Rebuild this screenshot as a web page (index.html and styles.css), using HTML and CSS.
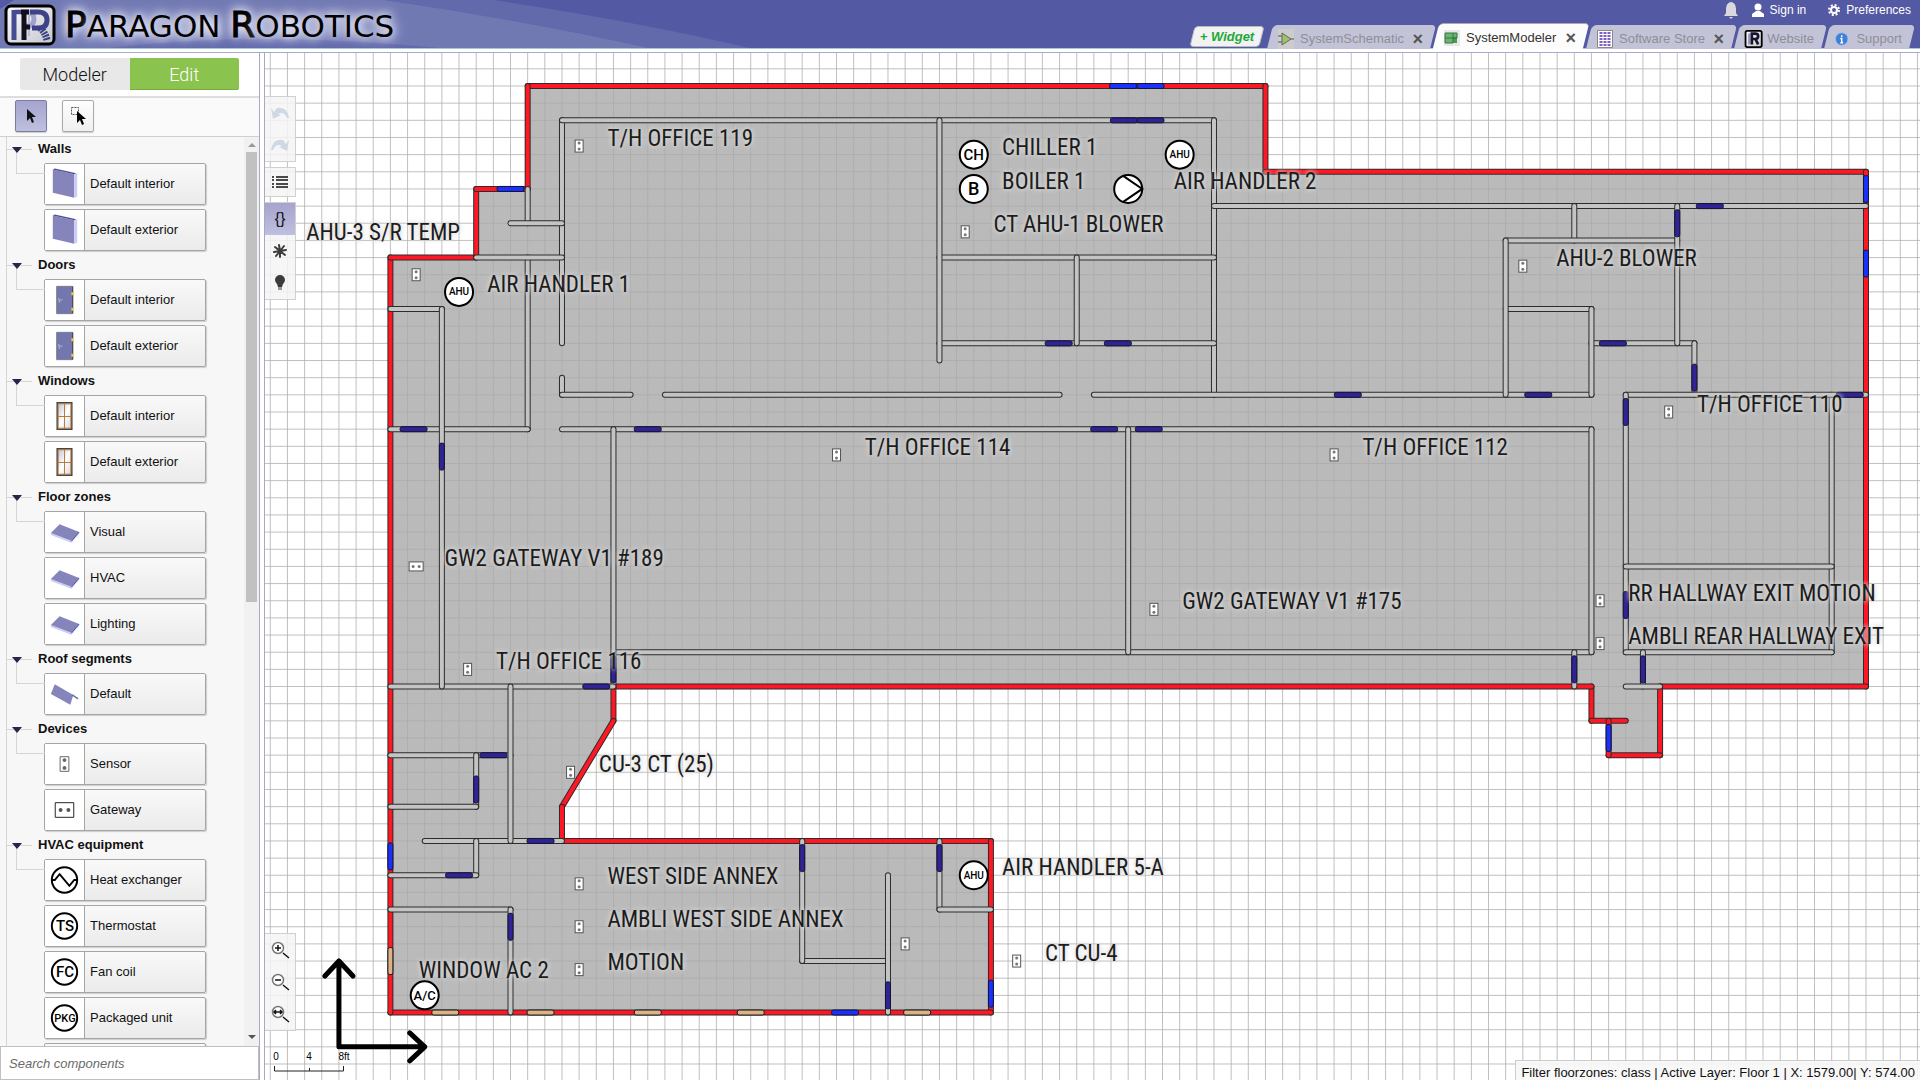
FILE: index.html
```html
<!DOCTYPE html>
<html lang="en">
<head>
<meta charset="utf-8">
<title>SystemModeler</title>
<link rel="stylesheet" href="styles.css">
</head>
<body>
<svg class="defs" aria-hidden="true">
  <defs>
    <linearGradient id="glass" x1="0" y1="0" x2="1" y2="1"><stop offset="0" stop-color="#b9bdd0"/><stop offset=".5" stop-color="#fff"/><stop offset="1" stop-color="#d5d6e2"/></linearGradient>
    <linearGradient id="plate" x1="0" y1="0" x2="1" y2="1"><stop offset="0" stop-color="#fff"/><stop offset="1" stop-color="#c4c4cc"/></linearGradient>
    <symbol id="i-wall" viewBox="0 0 40 40"><path d="M8 5l22 5v24L8 29z" fill="#8585bc"/><path d="M8 5l2-1 22 5-2 1z" fill="#4c4f96"/><path d="M30 10l3-1v24l-3 1z" fill="#ccccfa"/></symbol>
    <symbol id="i-door" viewBox="0 0 40 40"><path d="M12 6h16v28H12z" fill="#7476b0" stroke="#777b85"/><path d="M28.500 6v28" stroke="#333"/><path d="M14 20h4" stroke="#aabcc0"/><path d="M14 18l1 5" stroke="#aabcc0"/><path d="M28 12v3M28 28v3" stroke="#edc73c" stroke-width="2"/></symbol>
    <symbol id="i-window" viewBox="0 0 40 40"><path d="M12.500 6.500h15v27h-15z" fill="url(#glass)" stroke="#444" stroke-width="1.500"/><path d="M13.500 7.500h13v25h-13zM20 7v26M13 20.500h14" fill="none" stroke="#b87838"/></symbol>
    <symbol id="i-floor" viewBox="0 0 40 40"><path d="M6 21v2l21 8 8-9v-2l-8 9z" fill="#ccccfa"/><path d="M6 21l9-9 20 8-8 9z" fill="#8585bc"/><path d="M27 29.500l8-9.500" stroke="#4c4f96"/></symbol>
    <symbol id="i-roof" viewBox="0 0 40 40"><path d="M10 10l19 11-3 10L6 20z" fill="#8585bc"/><path d="M28 21l6 4" stroke="#7072b0" stroke-width="1.500"/></symbol>
    <symbol id="i-sensor" viewBox="0 0 40 40"><path d="M15.500 12.500h9v15h-9z" fill="#fff" stroke="#666"/><circle cx="20" cy="16" r="2" fill="#666"/><circle cx="20" cy="24" r="2" fill="#666"/></symbol>
    <symbol id="i-gateway" viewBox="0 0 40 40"><path d="M10.500 12.500h19v15h-19z" fill="#fff" stroke="#222"/><circle cx="16" cy="20" r="2" fill="#555"/><circle cx="24" cy="20" r="2" fill="#555"/></symbol>
    <symbol id="i-heat" viewBox="0 0 40 40"><circle cx="20" cy="20" r="13" fill="#fff" stroke="#000" stroke-width="2"/><path d="M7 20h3l5-6 10 12 5-6h3" fill="none" stroke="#000" stroke-width="2"/></symbol>
    <symbol id="i-ring" viewBox="0 0 40 40"><circle cx="20" cy="20" r="13" fill="#fff" stroke="#000" stroke-width="2"/></symbol>
    <symbol id="i-r" viewBox="0 0 20 20"><rect x="1" y="1" width="18" height="18" rx="2" fill="url(#plate)" stroke="#000" stroke-width="2"/><path d="M5 16V4" stroke="#8d92c3" stroke-width="2"/><path d="M8 16V4h4a3 3 0 0 1 0 6H8m4 0l3 6" fill="none" stroke="#15152e" stroke-width="3"/></symbol>
  </defs>
</svg>

<header class="top">
  <svg class="swoosh" width="760" height="48" viewBox="0 0 760 48" aria-hidden="true"><path d="M0 0h385q140 20 265 48H0z" fill="#7179b3"/><path d="M385 0h109q146 22 256 48H650Q520 20 385 0z" fill="#626aac"/><path d="M110 48q140-18 330 0z" fill="#626aac"/><path d="M0 0h14Q8 4 0 9z" fill="#5359a2"/></svg>
  <div class="brand">
    <svg class="badge" viewBox="0 0 52 42" role="img" aria-label="Paragon Robotics logo">
      <rect x="2" y="2" width="48" height="38" rx="5" fill="url(#plate)" stroke="#000" stroke-width="3"/>
      <g fill="none">
        <path d="M11 8h12q7 0 7 7t-7 7h-5" stroke="#9da2cc" stroke-width="5"/>
        <path d="M10 36V6" stroke="#454c94" stroke-width="5"/>
        <path d="M8 8h9" stroke="#454c94" stroke-width="4"/>
        <path d="M26 8h8q9 0 9 8t-9 8h-6" stroke="#3b4287" stroke-width="5"/>
        <path d="M25 6v26" stroke="#b9bcd9" stroke-width="2"/>
        <path d="M36 24q5 4 7 12" stroke="#3b4287" stroke-width="7" stroke-dasharray="2 1"/>
        <path d="M20 36V6M17 8h8M20 23h6" stroke="#120e1c" stroke-width="5"/>
      </g>
    </svg>
    <span class="brand-name"><b>P</b>ARAGON <b>R</b>OBOTICS</span>
  </div>
  <nav class="nav">
    <div class="account">
      <button class="plain" aria-label="Notifications"><svg width="14" height="18" viewBox="0 0 14 18"><path d="M7 1q5 1 5 7v4l2 3H0l2-3V8q0-6 5-7zM5 16h4l-2 2z" fill="#d9d9dd"/></svg></button>
      <a href="#"><svg width="12" height="14" viewBox="0 0 12 14"><circle cx="6" cy="4" r="3.500" fill="#fff"/><path d="M0 14v-3l4-3h4l4 3v3z" fill="#fff"/></svg>Sign in</a>
      <a href="#"><svg width="12" height="12" viewBox="0 0 12 12"><circle cx="6" cy="6" r="3" fill="none" stroke="#fff" stroke-width="2"/><circle cx="6" cy="6" r="5" fill="none" stroke="#fff" stroke-width="2" stroke-dasharray="2 1.930"/></svg>Preferences</a>
    </div>
    <div class="tabs">
      <button class="widget"><span>+ Widget</span></button>
      <a class="tab t1" href="#"><svg width="16" height="20" viewBox="0 0 16 20"><path d="M0 0h16v20H0z" fill="#ccc"/><path d="M0 7h4M0 13h4M12 10h4" stroke="#555"/><path d="M4 4l9 6-9 6z" fill="#9bc46a" stroke="#666"/></svg><span>SystemSchematic</span><i class="x">×</i></a>
      <a class="tab t2 on" href="#"><svg width="16" height="16" viewBox="0 0 16 16"><path d="M0 0h16v16H0z" fill="#e8e8e8"/><path d="M1 3h12v10H9V8H1z" fill="#4d9a55"/><path d="M1 3h12v5h-4v5H1z" fill="#6cb274" stroke="#34783c"/><path d="M1 8h12M9 3v5" stroke="#34783c"/></svg><span>SystemModeler</span><i class="x">×</i></a>
      <a class="tab t3" href="#"><svg width="16" height="18" viewBox="0 0 16 18"><path d="M.5.500h15v17H.5z" fill="#fff" stroke="#888"/><path d="M4 2v14M8 2v14M12 2v14" stroke="#7d62c4" stroke-width="3" stroke-dasharray="2 1"/></svg><span>Software Store</span><i class="x">×</i></a>
      <a class="tab t4" href="#"><svg width="20" height="18"><use href="#i-r"/></svg><span>Website</span></a>
      <a class="tab t5" href="#"><svg width="14" height="14" viewBox="0 0 14 14"><circle cx="7" cy="7" r="6.500" fill="#3f7fd6" stroke="#9cbbe8"/><path d="M7 3v2M5.500 6.500H7V11M5.500 11h3" fill="none" stroke="#fff" stroke-width="1.500"/></svg><span>Support</span></a>
    </div>
  </nav>
</header>

<main class="work">
  <aside class="side">
    <div class="modes"><button>Modeler</button><button class="on">Edit</button></div>
    <div class="tools">
      <button class="tool on" aria-label="Select"><svg width="20" height="20" viewBox="0 0 20 20"><path d="M6 3v12l3-3 2 5 2-1-2-5h4z" fill="#111"/></svg></button>
      <button class="tool" aria-label="Area select"><svg width="20" height="20" viewBox="0 0 20 20"><path d="M3.500 1.500h7v7h-7z" fill="none" stroke="#555" stroke-dasharray="2 1"/><path d="M9 5v12l3-3 2 5 2-1-2-5h4z" fill="#000"/></svg></button>
    </div>
    <div class="palette">
      <div class="tree">
        <section><h2>Walls</h2><button class="item"><svg><use href="#i-wall"/></svg><span>Default interior</span></button><button class="item"><svg><use href="#i-wall"/></svg><span>Default exterior</span></button></section>
        <section><h2>Doors</h2><button class="item"><svg><use href="#i-door"/></svg><span>Default interior</span></button><button class="item"><svg><use href="#i-door"/></svg><span>Default exterior</span></button></section>
        <section><h2>Windows</h2><button class="item"><svg><use href="#i-window"/></svg><span>Default interior</span></button><button class="item"><svg><use href="#i-window"/></svg><span>Default exterior</span></button></section>
        <section><h2>Floor zones</h2><button class="item"><svg><use href="#i-floor"/></svg><span>Visual</span></button><button class="item"><svg><use href="#i-floor"/></svg><span>HVAC</span></button><button class="item"><svg><use href="#i-floor"/></svg><span>Lighting</span></button></section>
        <section><h2>Roof segments</h2><button class="item"><svg><use href="#i-roof"/></svg><span>Default</span></button></section>
        <section><h2>Devices</h2><button class="item"><svg><use href="#i-sensor"/></svg><span>Sensor</span></button><button class="item"><svg><use href="#i-gateway"/></svg><span>Gateway</span></button></section>
        <section><h2>HVAC equipment</h2><button class="item"><svg><use href="#i-heat"/></svg><span>Heat exchanger</span></button><button class="item"><svg><use href="#i-ring"/><text class="ring-text" x="20" y="25" font-size="15">TS</text></svg><span>Thermostat</span></button><button class="item"><svg><use href="#i-ring"/><text class="ring-text" x="20" y="25" font-size="15">FC</text></svg><span>Fan coil</span></button><button class="item"><svg><use href="#i-ring"/><text class="ring-text" x="20" y="24" font-size="11">PKG</text></svg><span>Packaged unit</span></button><div class="item"></div></section>
      </div>
      <div class="scroll" aria-hidden="true"><i class="up"></i><i class="thumb"></i><i class="down"></i></div>
    </div>
    <input class="search" type="text" placeholder="Search components" aria-label="Search components">
  </aside>

  <section class="canvas">
    <svg class="plan" id="plan"></svg>
    <div class="dock dock-top">
      <div class="group tall">
        <button aria-label="Undo"><svg width="20" height="20" viewBox="0 0 20 20"><path d="M1 5l2 11 8-4-3-1q6-3 9 4l2 0Q17 3 7 5l-3 4z" fill="#cfd9e3"/></svg></button>
        <button aria-label="Redo"><svg width="20" height="20" viewBox="0 0 20 20"><path d="M19 5l-2 11-8-4 3-1q-6-3-9 4l-2 0Q3 3 13 5l3 4z" fill="#cfd9e3"/></svg></button>
      </div>
      <div class="group">
        <button aria-label="List"><svg width="18" height="14" viewBox="0 0 18 14"><path d="M1 2h2m2 0h12M1 5h2m2 0h12M1 9h2m2 0h12M1 12h2m2 0h12" stroke="#111" stroke-width="1.500"/></svg></button>
      </div>
      <div class="group tall">
        <button class="on">{}</button>
        <button aria-label="HVAC"><svg width="16" height="16" viewBox="0 0 16 16"><g stroke="#3c3c3c" stroke-width="2" stroke-linecap="round"><path d="M8 8L7 2M8 8l4-5M8 8l6-1M8 8l5 4M8 8v6M8 8l-4 5M8 8l-6 1M8 8L3 4"/></g></svg></button>
        <button aria-label="Lighting"><svg width="12" height="18" viewBox="0 0 12 18"><path d="M6 1a5 5 0 0 1 5 5q0 2-2 4l-1 3H4l-1-3Q1 8 1 6a5 5 0 0 1 5-5z" fill="#3c3c3c"/><path d="M4 13h4v3H4z" fill="#999"/></svg></button>
      </div>
    </div>
    <div class="dock dock-bottom">
      <div class="group tall">
        <button aria-label="Zoom in"><svg width="20" height="20" viewBox="0 0 20 20"><circle cx="8" cy="8" r="5.500" fill="#fff" stroke="#777" stroke-width="1.500"/><path d="M13 13l6 5M5 8h6M8 5v6" stroke="#111" stroke-width="1.500"/></svg></button>
        <button aria-label="Zoom out"><svg width="20" height="20" viewBox="0 0 20 20"><circle cx="8" cy="8" r="5.500" fill="#fff" stroke="#777" stroke-width="1.500"/><path d="M13 13l6 5M5 8h6" stroke="#111" stroke-width="1.500"/></svg></button>
        <button aria-label="Zoom to fit"><svg width="20" height="20" viewBox="0 0 20 20"><circle cx="8" cy="8" r="5.500" fill="#fff" stroke="#777" stroke-width="1.500"/><path d="M13 13l6 5M4 8h8M6 6L4 8l2 2M10 6l2 2-2 2" fill="none" stroke="#111" stroke-width="1.500"/></svg></button>
      </div>
    </div>
    <svg class="scale" width="80" height="24"><g text-anchor="middle"><text x="6" y="11">0</text><text x="39" y="11">4</text><text x="74" y="11">8ft</text></g><path d="M4.500 17v5h69v-5M39.500 19v3" fill="none" stroke="#222"/></svg>
    <div class="status">Filter floorzones: class | Active Layer: Floor 1 | X: 1579.00| Y: 574.00</div>
  </section>
</main>
<script src="plan.js"></script>
</body>
</html>
```
FILE: styles.css
```css
* { box-sizing: border-box; }
html, body { height: 100%; }
body {
  margin: 0;
  display: flex;
  flex-direction: column;
  overflow: hidden;
  background: #fff;
  color: #111;
  font: 13px/16px "Liberation Sans", Arial, sans-serif;
}
button { font: inherit; color: inherit; padding: 0; border: 0; background: none; }
a { color: inherit; text-decoration: none; }
.defs { position: absolute; width: 0; height: 0; }

/* header */
.top {
  position: relative;
  flex: none;
  display: flex;
  justify-content: space-between;
  height: 49px;
  background: #5359a2;
  border-bottom: 1px solid #a5cbd0;
}
.swoosh { position: absolute; left: 0; top: 0; }
.brand { position: relative; display: flex; align-items: center; gap: 9px; padding: 2px 0 0 4px; }
.badge { width: 52px; height: 42px; }
.brand-name {
  font: 31px/40px "DejaVu Sans", sans-serif;
  color: #000;
  text-shadow: 0 0 8px #fff, 0 0 12px #e8e8f6, 0 0 16px #d8d8ee;
}
.brand-name b { font-size: 36px; font-weight: 400; -webkit-text-stroke: 1px #000; }
.nav { position: relative; display: flex; flex-direction: column; justify-content: space-between; }
.account { display: flex; justify-content: flex-end; align-items: center; height: 20px; gap: 18px; padding-right: 9px; color: #fff; font-size: 12px; }
.account a { display: flex; align-items: center; gap: 6px; }
.account a:last-child { margin-left: 4px; }
.account .plain { display: flex; margin-right: -4px; }
.tabs { display: flex; align-items: flex-end; gap: 3px; padding-right: 8px; margin-bottom: -1px; }
.widget {
  position: relative;
  width: 70px;
  height: 21px;
  margin: 0 5px 2px 0;
  z-index: 0;
  color: #1fa83a;
  font-weight: bold;
  font-style: italic;
}
.widget::before, .tab::before {
  content: "";
  position: absolute;
  inset: 0;
  z-index: -1;
  transform: skewX(-14deg);
}
.widget::before { background: #f2f2f2; border: 1px solid #bbb; border-radius: 4px; }
.tab {
  position: relative;
  z-index: 0;
  display: flex;
  align-items: center;
  gap: 6px;
  height: 24px;
  padding: 3px 10px 0 8px;
  color: #8e8e97;
}
.tab::before { background: #c3c3d8; border-radius: 5px 4px 0 0; }
.tab .x { margin-left: auto; font: bold 18px/18px "Liberation Sans", sans-serif; color: #555; }
.tab.on { height: 26px; color: #333; }
.tab.on::before { background: #fcfcfc; border-top: 1px solid #aaa; }
.t1 { width: 163px; }
.t2 { width: 150px; }
.t3 { width: 145px; }
.t4 { width: 87px; gap: 4px; padding-left: 7px; }
.t5 { width: 85px; gap: 8px; }

/* workspace */
.work { flex: 1; display: flex; gap: 4px; min-height: 0; margin-top: 3px; border-top: 1px solid #a9a9cf; }
.side { flex: none; display: flex; flex-direction: column; width: 260px; border-right: 1px solid #a9a9c4; }
.modes { display: flex; padding: 5px 20px 6px; border-bottom: 2px solid #ddd; }
.modes button { flex: 1; height: 32px; padding-top: 1px; background: #e8e8e8; border-radius: 2px 0 0 2px; font: 300 18px/32px Roboto, sans-serif; }
.modes .on { background: #8bc34f; color: #fff; border-radius: 0 2px 2px 0; border-bottom: 1px solid #79ab42; }
.tools { display: flex; gap: 15px; height: 39px; padding: 2px 15px; background: #fafafa; border-bottom: 1px solid #d0d0d0; }
.tool { display: flex; align-items: center; justify-content: center; width: 32px; height: 32px; border: 1px solid #aaa; border-radius: 2px; background: linear-gradient(#fdfdfd, #efefef); box-shadow: 0 1px 1px #ccc; }
.tool.on { border-color: #7c7c9c; background: linear-gradient(#a4a4cf, #bfbfdf); }
.palette { flex: 1; display: flex; min-height: 0; background: #f7f7f7; }
.tree { flex: 1; margin-left: 6px; border-left: 1px solid #d5d5d5; overflow: hidden; }
.tree section { position: relative; display: flex; flex-direction: column; gap: 4px; padding: 0 0 2px 37px; }
.tree h2 { position: relative; height: 22px; margin: 0 0 0 -37px; padding-left: 31px; font-size: 13px; line-height: 24px; }
.tree h2::before { content: ""; position: absolute; left: 0; top: 12px; width: 25px; border-top: 1px solid #d5d5d5; }
.tree h2::after { content: ""; position: absolute; left: 5px; top: 10px; border: 5px solid transparent; border-top: 6px solid #25254a; border-bottom: 0; }
.tree section::before { content: ""; position: absolute; left: 9px; top: 14px; width: 28px; height: 22px; border: 1px solid #d5d5d5; border-width: 0 0 1px 1px; }
.item { flex: none; display: flex; align-items: center; width: 162px; height: 42px; border: 1px solid #a5a5a5; border-radius: 2px; background: linear-gradient(#f9f9f9, #ebebeb); box-shadow: 1px 1px 1px #ccc; }
.item svg { width: 40px; height: 40px; background: #fff; border-right: 1px solid #a5a5a5; }
.item span { padding-left: 5px; }
.ring-text { font-family: Roboto, sans-serif; font-weight: 500; text-anchor: middle; }
.scroll { display: flex; flex-direction: column; align-items: center; width: 15px; background: #f1f1f1; }
.scroll i { width: 11px; }
.up, .down { flex: none; height: 15px; }
.up::before, .down::before { content: ""; display: block; width: 0; margin: 6px 2px; border: 4px solid transparent; }
.up::before { border-bottom-color: #999; border-top: 0; }
.down::before { margin-top: 4px; border-top-color: #555; border-bottom: 0; }
.down { margin-top: auto; }
.thumb { height: 49.5%; background: #c1c1c1; }
.search { flex: none; width: 100%; height: 34px; padding: 0 8px; border: 1px solid #c0c0c0; background: #fff; font: italic 13px/16px "Liberation Sans", sans-serif; outline: 0; }
.search::placeholder { color: #6a6a6a; font-style: italic; }

/* drawing area */
.canvas { position: relative; flex: 1; min-width: 0; border-left: 1px solid #a9a9c4; overflow: hidden; }
.plan { display: block; width: 100%; height: 100%; }
.grid { stroke: #b0b0b0; stroke-opacity: .8; }
.floor { fill: #a9a9a9; fill-opacity: .8; }
.edge { stroke: #2c2c2c; stroke-width: 6; stroke-linecap: round; }
.core { stroke-width: 4; stroke-linecap: round; }
.opening { stroke: #15152c; stroke-width: 1; }
.part { fill: #fff; stroke: #555; }
.dot { fill: #777; }
.ring { fill: #fff; stroke: #000; stroke-width: 2; }
.label {
  font: 400 23px "Roboto Condensed", "Liberation Sans Narrow", Roboto, sans-serif;
  fill: #1c1c1c;
  text-shadow: 0 0 4px #e0e0e0, 0 0 6px #d4d4d4;
}
.axis { fill: none; stroke: #000; stroke-width: 5; stroke-linecap: round; stroke-linejoin: round; }
.dock { position: absolute; left: 0; display: flex; flex-direction: column; gap: 5px; width: 31px; }
.dock-top { top: 43px; }
.dock-bottom { bottom: 49px; }
.group { display: flex; flex-direction: column; background: rgba(245, 245, 245, .85); border: 1px solid #d0d0d0; border-left: 0; }
.group button { display: flex; align-items: center; justify-content: center; height: 28px; font-size: 16px; }
.group.tall button { height: 32px; }
.group .on { background: linear-gradient(#a4a4cf, #bfbfdf); }
.scale { position: absolute; left: 5px; bottom: 7px; font: 10px "Liberation Sans", sans-serif; }
.status { position: absolute; right: 0; bottom: 0; height: 20px; padding: 4px 5px 0; background: rgba(247, 247, 247, .9); border: 1px solid #ccc; border-width: 1px 0 0 1px; line-height: 15px; }
```
FILE: plan.js
```js
// Floor plan, in grid cells of two feet; the origin is the building's top left corner.
const CELL = 17.158, OX = 125.4, OY = 33;
const X = u => OX + u * CELL, Y = v => OY + v * CELL;
const RED = '#ff1724', GREY = '#c4c4c4', DOOR = '#2f2395', WINDOW = '#1a30ff', AC = '#deb37e';
const svg = document.getElementById('plan');

function add(tag, attrs, text) {
  const el = document.createElementNS('http://www.w3.org/2000/svg', tag);
  for (const k in attrs) el.setAttribute(k, attrs[k]);
  if (text) el.textContent = text;
  svg.appendChild(el);
}

for (let i = -7; i < 240; i++) {
  add('line', { class: 'grid', x1: X(i), x2: X(i), y1: 0, y2: '100%' });
  if (i > -2) add('line', { class: 'grid', y1: Y(i), y2: Y(i), x1: 0, x2: '100%' });
}

const outline = [8,0, 51,0, 51,5, 86,5, 86,35, 74,35, 74,39, 71,39, 71,37, 70,37, 70,35, 13,35, 13,37, 10,42, 10,44, 35,44, 35,54, 0,54, 0,10, 5,10, 5,6, 8,6];
add('polygon', { class: 'floor', points: outline.map((n, i) => i % 2 ? Y(n) : X(n)).join(' ') });

function wall([a, b, c, d], color) {
  const p = { x1: X(a), y1: Y(b), x2: X(c), y2: Y(d) };
  add('line', { class: 'edge', ...p });
  add('line', { class: 'core', stroke: color, ...p });
}
[[8,0,51,0],[51,0,51,5],[51,5,86,5],[86,5,86,35],[74,35,86,35],[74,35,74,39],[71,39,74,39],[70,35,70,37],[70,37,72,37],[71,37,71,39],
 [13,35,70,35],[13,35,13,37],[13,37,10,42],[10,42,10,44],[10,44,35,44],[35,44,35,54],[0,54,35,54],[0,10,0,54],[0,10,5,10],[5,6,5,10],[5,6,8,6],[8,0,8,6]
].forEach(w => wall(w, RED));
[[10,2,10,15],[10,17,10,18],[10,2,48,2],[10,18,14,18],[16,18,39,18],[48,2,48,18],[41,18,70,18],[32,10,48,10],[32,15,48,15],[32,2,32,16],[40,10,40,15],
 [48,7,86,7],[69,7,69,9],[65,9,75,9],[65,13,70,13],[65,9,65,18],[70,15,76,15],[75,7,75,15],[70,13,70,18],[76,15,76,18],[84,18,84,33],[72,18,86,18],
 [72,18,72,33],[72,28,84,28],[72,33,84,33],[10,20,70,20],[13,33,70,33],[70,20,70,33],[43,20,43,33],[13,20,13,35],[69,33,69,35],[73,33,73,35],[72,35,74,35],
 [8,6,8,8],[8,10,8,20],[7,8,10,8],[5,10,10,10],[0,13,3,13],[0,20,8,20],[0,35,13,35],[3,13,3,35],[0,39,7,39],[5,39,5,42],[0,42,5,42],[2,44,10,44],[7,35,7,44],
 [5,44,5,46],[0,46,5,46],[0,48,7,48],[7,48,7,54],[24,51,29,51],[24,44,24,51],[29,46,29,54],[32,44,32,48],[32,48,35,48]
].forEach(w => wall(w, GREY));

function opening(u, v, upright, color) {
  const w = upright ? 5 : 27, h = upright ? 27 : 5;
  add('rect', { class: 'opening', x: X(u) - w / 2, y: Y(v) - h / 2, width: w, height: h, rx: 2, fill: color });
}
[[42.75,2],[44.3,2],[38.95,15],[42.4,15],[55.8,18],[41.6,20],[44.2,20],[1.35,20],[15,20],[76.9,7],[71.25,15],[66.9,18],[85.05,18],[12,35],[6,39],[8.75,44],[4,46]
].forEach(d => opening(d[0], d[1], false, DOOR));
[[3,21.6],[75,8],[76,17],[72,19],[72,30.25],[69,34],[73,34],[13,34],[5,41],[7,49],[24,45],[32,45],[29,53]
].forEach(d => opening(d[0], d[1], true, DOOR));
[[42.7,0],[44.3,0],[7,6],[26.5,54]].forEach(d => opening(d[0], d[1], false, WINDOW));
[[86,6],[86,10.35],[71,38],[0,44.9],[35,52.9]].forEach(d => opening(d[0], d[1], true, WINDOW));
[[3.2,54],[8.75,54],[15,54],[21,54],[30.7,54]].forEach(d => opening(d[0], d[1], false, AC));
opening(0, 51, true, AC);

[[11,3.5],[33.5,8.5],[1.5,11],[66,10.5],[74.5,19],[26,21.5],[55,21.5],[44.5,30.5],[70.5,30],[70.5,32.5],[4.5,34],[10.5,40],[11,46.5],[11,49],[11,51.5],[30,50],[36.5,51]
].forEach(([u, v]) => {
  add('rect', { class: 'part', x: X(u) - 4, y: Y(v) - 6, width: 8, height: 12 });
  add('circle', { class: 'dot', cx: X(u), cy: Y(v) - 3, r: 1.5 });
  add('circle', { class: 'dot', cx: X(u), cy: Y(v) + 3, r: 1.5 });
});
add('rect', { class: 'part', x: X(1.5) - 7, y: Y(28) - 4.5, width: 14, height: 9 });
add('circle', { class: 'dot', cx: X(1.5) - 3, cy: Y(28), r: 1.5 });
add('circle', { class: 'dot', cx: X(1.5) + 3, cy: Y(28), r: 1.5 });

[[12.65,3.5,'T/H OFFICE 119'],[35.65,4,'CHILLER 1'],[35.65,6,'BOILER 1'],[35.15,8.5,'CT AHU-1 BLOWER'],[45.65,6,'AIR HANDLER 2'],[-4.9,9,'AHU-3 S/R TEMP'],
 [5.65,12,'AIR HANDLER 1'],[67.95,10.5,'AHU-2 BLOWER'],[76.15,19,'T/H OFFICE 110'],[27.65,21.5,'T/H OFFICE 114'],[56.65,21.5,'T/H OFFICE 112'],
 [3.15,28,'GW2 GATEWAY V1 #189'],[46.15,30.5,'GW2 GATEWAY V1 #175'],[72.15,30,'RR HALLWAY EXIT MOTION'],[72.15,32.5,'AMBLI REAR HALLWAY EXIT'],
 [6.15,34,'T/H OFFICE 116'],[12.15,40,'CU-3 CT (25)'],[12.65,46.5,'WEST SIDE ANNEX'],[12.65,49,'AMBLI WEST SIDE ANNEX'],[12.65,51.5,'MOTION'],
 [1.65,52,'WINDOW AC 2'],[35.65,46,'AIR HANDLER 5-A'],[38.15,51,'CT CU-4']
].forEach(([u, v, t]) => add('text', { class: 'label', x: X(u), y: Y(v) }, t));

[[34,4,'CH',15],[34,6,'B',18],[46,4,'AHU',10],[43,6,'',0],[4,12,'AHU',10],[34,46,'AHU',10],[2,53,'A/C',13]].forEach(([u, v, t, s]) => {
  add('circle', { class: 'ring', cx: X(u), cy: Y(v), r: 14 });
  if (t) add('text', { class: 'ring-text', x: X(u), y: Y(v) + s * .36, 'font-size': s }, t);
  else add('path', { d: `M${X(u) - 5} ${Y(v) - 13}L${X(u) + 14} ${Y(v)}L${X(u) - 5} ${Y(v) + 13}`, fill: 'none', stroke: '#000', 'stroke-width': 2 });
});

add('path', { class: 'axis', d: `M${X(-3)} ${Y(51)}V${Y(56)}H${X(2)}M${X(-3) - 14} ${Y(51) + 15}l14 -15l14 15M${X(2) - 15} ${Y(56) - 14}l15 14l-15 14` });
```
